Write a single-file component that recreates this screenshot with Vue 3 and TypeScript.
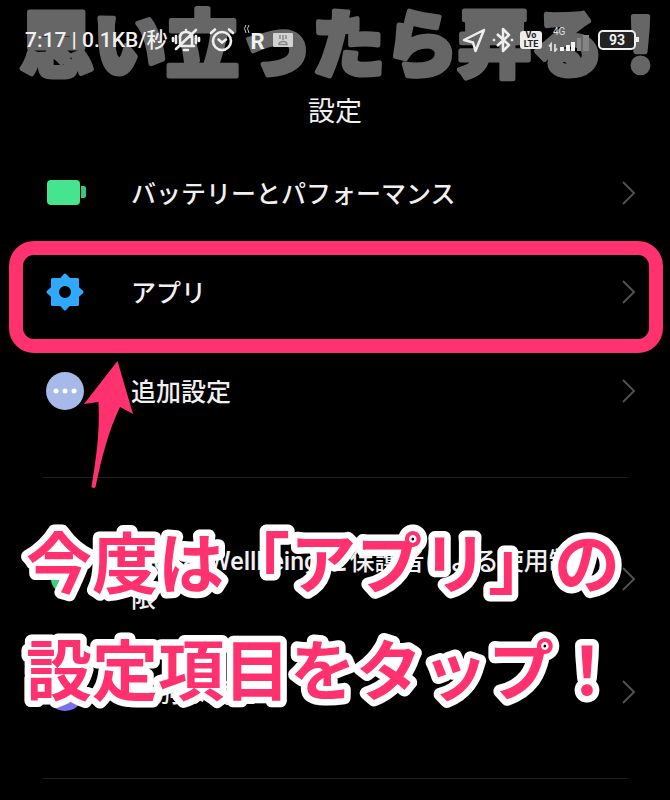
<script setup lang="ts">
type IconName = 'battery' | 'gear' | 'more' | 'wellbeing' | 'special'

interface SettingItem {
  id: string
  label: string
  icon: IconName
  tall?: boolean
  highlighted?: boolean
  pointed?: boolean
}

const groups: SettingItem[][] = [
  [
    { id: 'battery', label: 'バッテリーとパフォーマンス', icon: 'battery' },
    { id: 'apps', label: 'アプリ', icon: 'gear', highlighted: true },
    { id: 'additional', label: '追加設定', icon: 'more', pointed: true },
  ],
  [
    { id: 'wellbeing', label: 'Digital Wellbeing と保護者による使用制限', icon: 'wellbeing', tall: true },
    { id: 'special', label: '特別な機能', icon: 'special' },
  ],
]

const captionLines: string[] = ['今度は「アプリ」の', '設定項目をタップ！']
</script>

<template>
  <main class="screen">
    <svg class="watermark" width="670" height="100" viewBox="0 0 670 100">
      <text x="20" y="71">思い立ったら弄る！</text>
    </svg>

    <header class="status">
      <div class="status-side">
        <span class="clock">7:17 | 0.1KB/秒</span>
        <svg class="bell" width="30" height="26" viewBox="0 0 30 26" fill="none" stroke="#eee" stroke-width="2.600" stroke-linecap="round">
          <path d="M8 19h15M9 17v-6c0-4 2-6 6-6s6 2 6 6v7M15 3v2M13 23h4M5 22 25 3M5 9v7M25 9v7M2 11v3M28 11v3" />
        </svg>
        <svg class="alarm" width="26" height="26" viewBox="0 0 26 26" fill="none" stroke="#eee" stroke-width="2.600" stroke-linecap="round">
          <circle cx="13" cy="14" r="9" />
          <path d="m9.500 12.500 3.500 3 4-3M2 6l4-3.500M24 6l-4-3.500" />
        </svg>
        <span class="roaming">
          <svg width="7" height="10" viewBox="0 0 7 10" fill="none" stroke="#ccc" aria-hidden="true">
            <path d="M3 1Q0 4 3 9M6 1Q3 4 6 9" />
          </svg>
          <span class="roaming-letter">R</span>
        </span>
        <svg class="card" width="20" height="16" viewBox="0 0 20 16">
          <rect x="0" y="1" width="20" height="14" rx="1" fill="#d2d2d2" />
          <path d="M7 3v4M10 3v5M13 3v4M6 12.500q0-3 4-3t4 3z" stroke="#888" stroke-width="1.500" fill="none" />
        </svg>
      </div>

      <div class="status-side right">
        <svg width="24" height="26" viewBox="0 0 24 26" fill="none" stroke="#eee" stroke-width="2.500" stroke-linejoin="round">
          <path d="M22 3 2 13l9 2.500L13.500 24z" />
        </svg>
        <svg width="22" height="26" viewBox="0 0 22 26" fill="none" stroke="#eee" stroke-width="2.500" stroke-linejoin="round">
          <path d="m5 7 12 11-6 6V2l6 6L5 19" />
          <circle cx="2" cy="13" r="1" fill="#eee" stroke-width="1" />
          <circle cx="20" cy="13" r="1" fill="#eee" stroke-width="1" />
        </svg>
        <span class="volte"><span>Vo</span><span>LTE</span></span>
        <span class="signal">
          <span class="network">4G</span>
          <svg width="44" height="18" viewBox="0 0 44 18" aria-hidden="true">
            <path d="M3 17v-7L1 12.500M7 10v7l2-2.500" stroke="#ddd" stroke-width="1.800" fill="none" />
            <path d="M12 13h4v4h-4zM18 11h4v6h-4zM23 8h4v9h-4z" fill="#f2f2f2" />
            <path d="M29 4h4v13h-4zM35 1h6v16h-6z" fill="#858585" />
          </svg>
        </span>
        <span class="charge">93</span>
      </div>
    </header>

    <h1 class="title">設定</h1>

    <nav aria-label="設定">
      <ul v-for="(group, index) in groups" :key="index" class="group">
        <li v-for="item in group" :key="item.id" class="item">
          <a :href="'#' + item.id" class="row" :class="{ tall: item.tall }">
            <svg class="icon" width="44" height="40" viewBox="0 0 44 40" aria-hidden="true">
              <g v-if="item.icon === 'battery'" fill="#46e58d">
                <rect x="4" y="7" width="33" height="25" rx="4" />
                <path d="M38 13h3q2 0 2 2v8q0 2-2 2h-3z" fill="#38c978" />
              </g>
              <path
                v-else-if="item.icon === 'gear'"
                fill="#30a8fb"
                fill-rule="evenodd"
                stroke="#30a8fb"
                stroke-width="3"
                stroke-linejoin="round"
                d="m22 3 4 4q1 .5 2.500.5h6V14q0 1.500.5 2.500l4 3.500-4 3.500q-.5 1-.5 2.500v6.500H28q-1.500 0-2.500.5L22 37l-3.500-4q-1-.5-2.500-.5H9.500V26q0-1.500-.5-2.500L5 20l4-3.500q.5-1 .5-2.500V7.500H16q1.500 0 2.500-.5zM22 12.500a7.500 7.500 0 1 0 0 15a7.500 7.500 0 1 0 0-15z"
              />
              <g v-else-if="item.icon === 'more'">
                <circle cx="22" cy="20" r="19" fill="#a6b9e8" />
                <g fill="#fff">
                  <circle cx="13" cy="20" r="2.500" />
                  <circle cx="22" cy="20" r="2.500" />
                  <circle cx="31" cy="20" r="2.500" />
                </g>
              </g>
              <circle v-else-if="item.icon === 'wellbeing'" cx="22" cy="20" r="14" fill="#3fcf81" />
              <g v-else>
                <circle cx="22" cy="20" r="19" fill="#7b70ee" />
                <path d="m22 10 3 7 7 3-7 3-3 7-3-7-7-3 7-3z" fill="#fff" />
              </g>
            </svg>
            <span class="label">{{ item.label }}</span>
            <svg class="chevron" width="16" height="26" viewBox="0 0 16 26" aria-hidden="true">
              <path d="m2 2 11 11L2 24" fill="none" stroke="#505050" stroke-width="2" />
            </svg>
          </a>
          <span v-if="item.highlighted" class="frame"></span>
          <svg v-if="item.pointed" class="arrow" width="50" height="130" viewBox="0 0 50 130" aria-hidden="true">
            <path d="M33.500 1 49 54 36 47C24 72 18 97 11.500 127q-2 2-4 0C12 98 16 74 14.500 42L0 44z" fill="#ff316f" />
          </svg>
        </li>
      </ul>
    </nav>

    <svg class="caption" width="640" height="214" viewBox="0 0 640 214">
      <text v-for="(line, index) in captionLines" :key="line" x="26" :y="75 + index * 107">{{ line }}</text>
    </svg>
  </main>
</template>

<style>
body {
  background: #000;
}
</style>

<style scoped>
.screen {
  position: relative;
  min-height: 100vh;
  box-sizing: border-box;
  overflow: hidden;
  background: #000;
  color: #f0f0f0;
  font-family: Roboto, "Noto Sans CJK JP", sans-serif;
}

.watermark {
  position: absolute;
  top: 0;
  left: 0;
  fill: #666;
  stroke: #666;
  stroke-width: 5px;
  stroke-linejoin: round;
  font-family: "Noto Sans CJK JP", sans-serif;
  font-size: 73px;
  font-weight: 900;
}

.status {
  position: relative;
  display: flex;
  align-items: center;
  justify-content: space-between;
  height: 80px;
  padding: 0 34px 0 25px;
}

.status-side {
  display: flex;
  align-items: center;
  gap: 8px;
}

.status-side.right {
  gap: 6px;
}

.clock {
  font-size: 21px;
  font-weight: 500;
  line-height: 28px;
  white-space: nowrap;
}

.bell {
  margin-left: -4px;
}

.roaming {
  display: flex;
  align-items: flex-start;
}

.roaming-letter {
  padding-top: 4px;
  font-size: 22px;
  font-weight: 700;
  line-height: 28px;
}

.volte {
  display: flex;
  flex-direction: column;
  align-items: center;
  width: 22px;
  border-radius: 3px;
  background: #eee;
  color: #222;
  font-size: 9px;
  font-weight: 700;
  line-height: 9px;
}

.signal {
  display: flex;
  flex-direction: column;
}

.network {
  height: 6px;
  padding-left: 5px;
  color: #ddd;
  font-size: 10px;
  line-height: 8px;
}

.charge {
  position: relative;
  width: 34px;
  border: 2px solid #eee;
  border-radius: 5px;
  background: #222;
  font-size: 14px;
  font-weight: 700;
  line-height: 16px;
  text-align: center;
}

.charge::after {
  content: "";
  position: absolute;
  top: 5px;
  right: -5px;
  width: 3px;
  height: 5px;
  background: #eee;
}

.title {
  position: relative;
  margin: 12px 0 11px;
  font-size: 27px;
  font-weight: 400;
  line-height: 40px;
  text-align: center;
}

.group {
  margin: 0;
  padding: 0;
  list-style: none;
}

.group::after {
  content: "";
  display: block;
  height: 1px;
  margin: 37px 43px;
  background: #202020;
}

.group:last-child::after {
  margin-bottom: 20px;
}

.item {
  position: relative;
}

.row {
  display: flex;
  align-items: center;
  box-sizing: border-box;
  min-height: 99px;
  padding: 0 33px 0 43px;
  color: inherit;
  text-decoration: none;
}

.row.tall {
  min-height: 127px;
}

.icon {
  flex: none;
}

.label {
  flex: 1;
  margin: 0 45px 0 44px;
  padding-top: 3px;
  font-size: 25px;
  font-weight: 500;
  line-height: 37px;
}

.chevron {
  flex: none;
}

.frame {
  position: absolute;
  inset: -1px 7px -12px 9px;
  border: 14px solid #ff316f;
  border-radius: 25px;
  pointer-events: none;
}

.arrow {
  position: absolute;
  top: 19px;
  left: 84px;
  pointer-events: none;
}

.caption {
  position: absolute;
  top: 513px;
  left: 0;
  fill: #ff316f;
  stroke: #fff;
  stroke-width: 13px;
  stroke-linejoin: round;
  paint-order: stroke fill;
  font-family: "Noto Sans CJK JP", sans-serif;
  font-size: 66px;
  font-weight: 700;
  pointer-events: none;
}
</style>
